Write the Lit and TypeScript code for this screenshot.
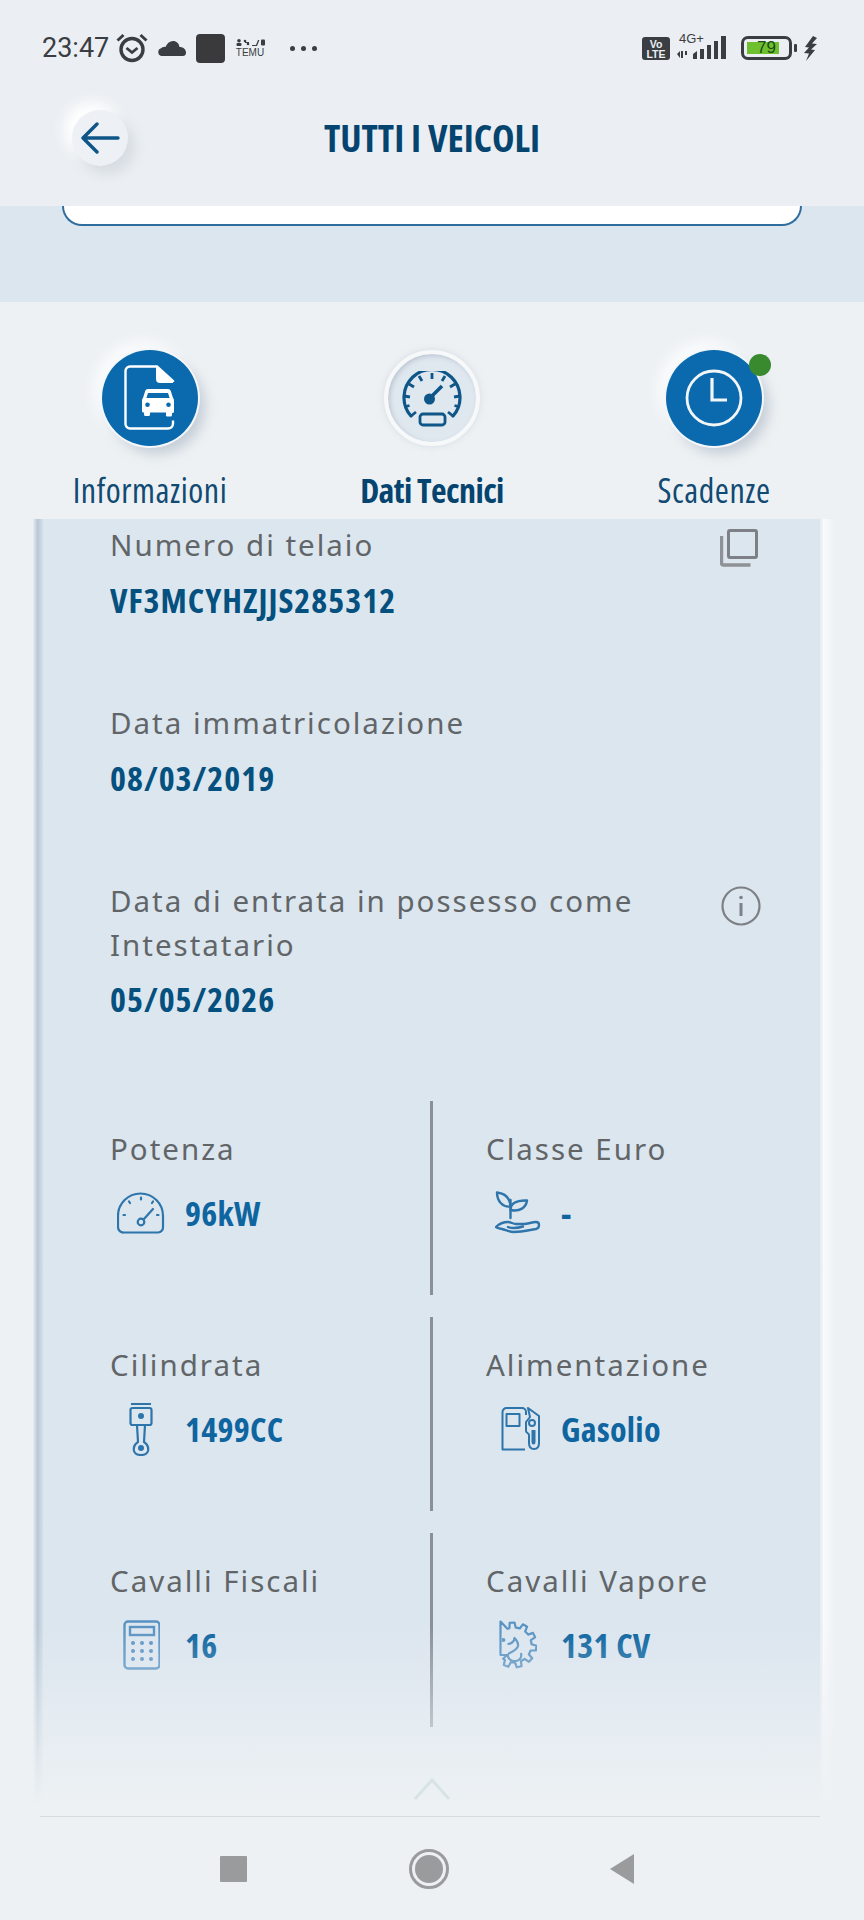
import { LitElement, html, css } from "lit";
import { customElement } from "lit/decorators.js";

// Half-gear outline for the "Cavalli Vapore" icon: teeth on the right, straight edge on the left.
const gearPath = (() => {
  const cx = 15;
  const cy = 25;
  const outer = 22.5;
  const inner = 17.5;
  const teeth = 7;
  const start = -112;
  const end = 128;
  const step = (end - start) / teeth;
  const pt = (a: number, r: number) => {
    const t = (a * Math.PI) / 180;
    return `${(cx + r * Math.cos(t)).toFixed(1)} ${(cy + r * Math.sin(t)).toFixed(1)}`;
  };
  let d = "M1.500 1.500L" + pt(start, inner);
  for (let n = 0; n < teeth; n++) {
    const a = start + n * step;
    d += ` L${pt(a + step * 0.2, inner)} L${pt(a + step * 0.32, outer)} L${pt(a + step * 0.68, outer)} L${pt(a + step * 0.8, inner)} L${pt(a + step, inner)}`;
  }
  return d + " L8 35 H1.500 Z";
})();

const i = {
  alarm: html`<svg width="32" height="30" viewBox="0 0 32 30" fill="none" stroke="#3a3d41" stroke-width="3.400"><circle cx="16" cy="16.500" r="11"/><path d="M10.500 15l5.500 4.500 5.500-4.500" stroke-width="2.800"/><path d="M1.500 7.500l6-5.500M30.500 7.500l-6-5.500" stroke-width="3"/></svg>`,
  cloud: html`<svg width="28" height="15" viewBox="0 0 28 15"><path fill="#3a3d41" d="M4 15a4 4 0 0 1-1-7.800C4 6.500 6 5.500 7.500 6 9 2 12 0 15 0c3.500 0 6 2.500 6.500 6 3-.2 6.500 2 6.500 5.500 0 2-1 3.500-3 3.500z"/></svg>`,
  temuTop: html`<svg width="29" height="7" viewBox="0 0 29 7" fill="#3a3d41"><circle cx="3" cy="1.800" r="1.800"/><rect x=".5" y="4" width="5" height="3" rx="1"/><circle cx="9" cy="2" r="1.300"/><circle cx="12" cy="5" r="1.300"/><rect x="9" y="3" width="4" height="1"/><path d="M16 6l4 0 2-5h1.400l-2.400 6h-5z"/><rect x="25" y=".5" width="4" height="6" rx="1"/></svg>`,
  back: html`<svg width="40" height="32" viewBox="0 0 40 32" fill="none" stroke="#0f5688" stroke-width="3.400" stroke-linecap="round" stroke-linejoin="round"><path d="M38 16H3M17 2L3 16l14 14"/></svg>`,
  doc: html`<svg width="52" height="66" viewBox="0 0 52 66" fill="none"><path stroke="#fff" stroke-width="2.400" d="M49 17V16L33 1.500H6a4.500 4.500 0 0 0-4.500 4.500v53a4.500 4.500 0 0 0 4.500 4.500h38a5 5 0 0 0 5-5v-3"/><path fill="#fff" d="M32 1l17 16v1H36a4 4 0 0 1-4-4z"/><path fill="#fff" fill-rule="evenodd" d="M24 24h20c1.400 0 2.400.8 2.800 2l2.200 7c.6.600 1 1.500 1 2.500v11a1.500 1.500 0 0 1-1.500 1.500H48v2a1.500 1.500 0 0 1-1.500 1.500h-3A1.500 1.500 0 0 1 42 49.500v-2H26v2a1.500 1.500 0 0 1-1.500 1.500h-3a1.500 1.500 0 0 1-1.500-1.500v-2h-.5A1.500 1.500 0 0 1 18 46.500v-11c0-1 .4-1.900 1-2.500l2.200-7c.4-1.200 1.400-2 2.800-2zM24 28l-1.600 5h23.200L44 28zM23.500 37.500a2.300 2.300 0 1 0 0 4.600 2.300 2.300 0 0 0 0-4.600zm21 0a2.300 2.300 0 1 0 0 4.600 2.300 2.300 0 0 0 0-4.600z"/></svg>`,
  gauge: html`<svg width="60" height="56" viewBox="0 0 60 56" fill="none" stroke="#0f5688" stroke-width="3.200"><path d="M9 45a28 28 0 1 1 42 0" stroke-linecap="round"/><path d="M30 2v6M17 5l3 5M7 13l5 3M2 25l6 1M2.500 36l5-1.500M43 5l-3 5M53 13l-5 3M58 25l-6 1M57.500 36l-5-1.500M9 45l5-4M51 45l-5-4" stroke-width="2.800"/><circle cx="27.500" cy="28" r="5.500" fill="#0f5688" stroke="none"/><path d="M29 26l11-11" stroke-width="3.600"/><rect x="18" y="43" width="25" height="11" rx="3" stroke-width="2.800"/></svg>`,
  clock: html`<svg width="58" height="58" viewBox="0 0 58 58" fill="none" stroke="#f3f6f9" stroke-width="2.800"><circle cx="29" cy="29" r="27"/><path d="M27 9v22h15" stroke-width="3.200"/></svg>`,
  copy: html`<svg width="38" height="38" viewBox="0 0 38 38" fill="none" stroke="#7d8084" stroke-width="3"><rect x="8.500" y="1.500" width="28" height="27" rx="1.500"/><path d="M1.500 7v27a2 2 0 0 0 2 2h27" stroke-width="3.400" stroke="#8e9195"/></svg>`,
  info: html`<svg width="40" height="40" viewBox="0 0 40 40" fill="none" stroke="#7d8084" stroke-width="2.200"><circle cx="20" cy="20" r="18.500"/><path d="M20 17v13" stroke-width="3"/><circle cx="20" cy="11.500" r="1.800" fill="#7d8084" stroke="none"/></svg>`,
  power: html`<svg width="48" height="42" viewBox="0 0 48 42" fill="none" stroke="#2d75ab" stroke-width="2.200"><path d="M7 40.500h34a5 5 0 0 0 5-5.500v-11a22.500 22.500 0 1 0-45 0v11a5.500 5.500 0 0 0 6 5.500z"/><circle cx="24" cy="30" r="3.300"/><path d="M26.500 27.500L36 17" stroke-linecap="round" stroke-width="2.200"/><path d="M24 5.500v2M12 9.500l1 1.500M36 9.500l-1 1.500M6.500 23H8M41.500 23H40" stroke-linecap="round" stroke-width="2.200"/></svg>`,
  leaf: html`<svg width="48" height="44" viewBox="-2 0 48 44" fill="none" stroke="#2d75ab" stroke-width="2.400" stroke-linejoin="round" stroke-linecap="round"><path d="M2 1.500c8 1 13 4.500 13.500 14C8 16.500 2 10.500 2 1.500z"/><path d="M15.500 19c0-6 5-10 16.500-9.500-1 7-7 11.500-16.500 9.500z"/><path d="M15.500 9v18"/><path d="M1 36c3-3 8-5 12-5 3 0 5 2 8 2h8c4 0 8-2 12-2 2 0 3 1 3 3 0 2-.5 3.500-3 4-6 1-15 3-22 3-5 0-8-2-12-3-3-.5-6-1-6-2z"/><path d="M13 36c5 2 10 1 15-.5"/></svg>`,
  piston: html`<svg width="24" height="54" viewBox="0 0 24 54" fill="none" stroke="#2d75ab" stroke-width="2.200" stroke-linejoin="round"><path d="M2 2h20" stroke-width="2"/><rect x="1.500" y="6" width="21" height="17" rx="2"/><circle cx="12" cy="14" r="3" fill="#2d75ab" stroke="none"/><path d="M8 23l1 17c-3 2-5 4-4 9 1 3 3 4 7 4s6-1 7-4c1-5-1-7-4-9l1-17"/><circle cx="12" cy="46" r="3" fill="#2d75ab" stroke="none"/></svg>`,
  pump: html`<svg width="48" height="44" viewBox="-8 0 48 44" fill="none" stroke="#2d75ab" stroke-width="2" stroke-linejoin="round"><path d="M24 42.500H1.500V5a4 4 0 0 1 4-4H21a4 4 0 0 1 4 4v3"/><rect x="5.500" y="7" width="13" height="12"/><path d="M27 1l11 8v27c0 4-2 6-5 6s-5-2-5-6v-8c0-2-3-2-3-4v-9l4-5z"/><circle cx="31" cy="16" r="3"/><path d="M31.500 23v12c0 2 2 2 2 0V23"/></svg>`,
  calc: html`<svg width="38" height="50" viewBox="-1 0 38 50" fill="none" stroke="#5a93c2" stroke-width="2.400"><rect x="1.500" y="1.500" width="35" height="47" rx="3.500"/><rect x="7" y="7" width="24" height="8"/><g fill="#5a93c2" stroke="none"><circle cx="10" cy="23" r="2"/><circle cx="19" cy="23" r="2"/><circle cx="28" cy="23" r="2"/><circle cx="10" cy="31" r="2"/><circle cx="19" cy="31" r="2"/><circle cx="28" cy="31" r="2"/><circle cx="10" cy="39" r="2"/><circle cx="19" cy="39" r="2"/><circle cx="28" cy="39" r="2"/></g></svg>`,
  steam: html`<svg width="40" height="50" viewBox="-2 0 40 50" fill="none" stroke="#5a93c2" stroke-width="2.200" stroke-linejoin="round"><path d=${gearPath}/><path d="M9 34c4-2 9-4 10-8 .5-3-1.500-6-3.500-8 0 4-4 6-7 6"/><path d="M9 34c-1 4 3 8 8 7 4-.5 6-4 5-8"/><circle cx="4.500" cy="20" r=".8" fill="#5a93c2"/></svg>`,
  bolt: html`<svg width="14" height="25" viewBox="0 0 14 25"><path fill="#3a3d41" d="M9 0L1 11l4 .5L0 17l5 .5-3 7.500 9-11-4-.6 6-5.400-5-.4L13 2z"/></svg>`,
};

const rows = [
  [
    { label: "Potenza", value: "96kW", icon: i.power },
    { label: "Classe Euro", value: "-", icon: i.leaf },
  ],
  [
    { label: "Cilindrata", value: "1499CC", icon: i.piston },
    { label: "Alimentazione", value: "Gasolio", icon: i.pump },
  ],
  [
    { label: "Cavalli Fiscali", value: "16", icon: i.calc },
    { label: "Cavalli Vapore", value: "131 CV", icon: i.steam },
  ],
];

@customElement("app-root")
export class AppRoot extends LitElement {
  static styles = css`
    :host {
      display: flex;
      flex-direction: column;
      width: 864px;
      height: 1920px;
      overflow: hidden;
      background: #edf1f4;
      color: #3a3d41;
      font-family: "Noto Sans", sans-serif;
    }
    .status {
      height: 76px;
      flex: none;
      display: flex;
      align-items: center;
      padding: 20px 46px 0 42px;
      box-sizing: border-box;
      background: #ebeff3;
    }
    .time {
      font: 400 27px/30px Roboto, sans-serif;
      color: #3a3d41;
      width: 64px;
    }
    .status-left {
      display: flex;
      align-items: center;
      gap: 10px;
    }
    .app-square {
      width: 29px;
      height: 29px;
      border-radius: 4px;
      background: #3a3a3d;
    }
    .temu {
      display: flex;
      flex-direction: column;
      align-items: center;
      gap: 2px;
      width: 30px;
      font: 400 10px/9px "Liberation Sans", sans-serif;
      color: #3a3d41;
    }
    .dots {
      display: flex;
      gap: 6px;
      margin-left: 15px;
    }
    .dots span {
      width: 5px;
      height: 5px;
      border-radius: 50%;
      background: #3a3d41;
    }
    .spacer {
      flex: 1;
    }
    .status-right {
      display: flex;
      align-items: center;
    }
    .volte {
      width: 28px;
      height: 23px;
      border-radius: 3px;
      background: #3a3d41;
      color: #ebeff3;
      font: 700 10.5px/10px "Liberation Sans", sans-serif;
      text-align: center;
      padding-top: 2px;
      box-sizing: border-box;
      margin-right: 7px;
    }
    .net {
      position: relative;
      width: 53px;
      height: 24px;
      margin-right: 11px;
    }
    .net-label {
      position: absolute;
      left: 2px;
      top: -4px;
      font: 400 13px/13px "Liberation Sans", sans-serif;
      color: #3a3d41;
    }
    .bars {
      position: absolute;
      right: 0;
      bottom: 0;
    }
    .battery {
      position: relative;
      width: 51px;
      height: 24px;
      box-sizing: border-box;
      border: 3px solid #3a3d41;
      border-radius: 7px;
      padding: 3px;
      margin-right: 2px;
    }
    .battery-fill {
      width: 32px;
      height: 100%;
      background: #6ec02f;
    }
    .battery-text {
      position: absolute;
      inset: 0;
      text-align: center;
      font: 400 17px/18px "Liberation Sans", sans-serif;
      color: #1d4a16;
    }
    .nub {
      width: 3px;
      height: 8px;
      background: #3a3d41;
      border-radius: 1px;
      margin-right: 7px;
    }
    .appbar {
      height: 130px;
      flex: none;
      position: relative;
      display: flex;
      align-items: flex-start;
      justify-content: center;
      background: #ebeff3;
    }
    .back {
      position: absolute;
      left: 72px;
      top: 34px;
      width: 56px;
      height: 56px;
      border-radius: 50%;
      background: #edf0f4;
      display: flex;
      align-items: center;
      justify-content: center;
      box-shadow: 7px 8px 12px rgba(170, 180, 190, 0.3), -8px -8px 14px #fff;
    }
    .title {
      margin-top: 38px;
      font-family: "Open Sans", sans-serif;
      font-weight: 700;
      font-stretch: 75%;
      font-size: 38px;
      line-height: 46px;
      color: #04446f;
    }
    .band {
      height: 96px;
      flex: none;
      background: #dce6ef;
    }
    .band-card {
      margin: 0 62px;
      height: 20px;
      box-sizing: border-box;
      background: #fff;
      border: 2px solid #2f6d9e;
      border-top: 0;
      border-radius: 0 0 20px 20px;
    }
    .tabs {
      height: 217px;
      flex: none;
      box-sizing: border-box;
      padding: 48px 50px 0;
      display: flex;
      justify-content: space-between;
    }
    .tab {
      position: relative;
      width: 200px;
      display: flex;
      flex-direction: column;
      align-items: center;
    }
    .circle {
      position: relative;
      width: 96px;
      height: 96px;
      border-radius: 50%;
      background: #0a6aad;
      display: flex;
      align-items: center;
      justify-content: center;
      box-shadow: 0 0 0 2px #f4f7fa, 7px 8px 12px rgba(160, 172, 185, 0.5),
        -8px -8px 14px #fbfcfd;
    }
    .circle.active {
      box-sizing: border-box;
      background: #dfe7ef;
      border: 4px solid #f6f8fa;
      padding-top: 2px;
      box-shadow: inset 2px 2px 4px rgba(160, 172, 185, 0.5),
        0 0 6px rgba(190, 200, 210, 0.5);
    }
    .dot {
      position: absolute;
      top: 4px;
      right: -9px;
      width: 22px;
      height: 22px;
      border-radius: 50%;
      background: #39892f;
    }
    .tab-label {
      margin-top: 23px;
      font-family: "Open Sans", sans-serif;
      font-stretch: 75%;
      font-size: 34px;
      line-height: 42px;
      letter-spacing: 0.55px;
      color: #114a72;
      white-space: nowrap;
    }
    .tab-label.active {
      font-weight: 700;
      letter-spacing: -0.6px;
      color: #04446f;
    }
    .frame {
      flex: 1;
      min-height: 0;
      margin: 0 44px 0 43px;
      position: relative;
      background: #dce6ef;
    }
    .frame::before {
      content: "";
      position: absolute;
      top: 0;
      bottom: 0;
      left: -10px;
      width: 10px;
      background: linear-gradient(to right, #e8edf2, #b9c8d6 45%, #d4dfe9);
    }
    .frame::after {
      content: "";
      position: absolute;
      top: 0;
      bottom: 0;
      right: -15px;
      width: 15px;
      background: linear-gradient(to right, #e9eef3 0 2px, #f9fafc 3px, #edf1f5);
    }
    .fade {
      position: absolute;
      z-index: 1;
      left: -10px;
      right: -15px;
      bottom: 0;
      height: 190px;
      background: linear-gradient(to bottom, rgba(237, 241, 244, 0), #edf1f4 95%);
    }
    .content {
      padding: 4px 62px 0 67px;
      display: flex;
      flex-direction: column;
    }
    .field {
      position: relative;
      margin-bottom: 79px;
    }
    .field.tall {
      margin-bottom: 81px;
    }
    .field.tall .value {
      margin-top: 10px;
    }
    .label {
      font: 400 29.5px/44px "Noto Sans", sans-serif;
      color: #616568;
      letter-spacing: 2px;
    }
    .value {
      margin-top: 11px;
      font-family: "Open Sans", sans-serif;
      font-weight: 700;
      font-stretch: 75%;
      font-size: 34px;
      line-height: 44px;
      letter-spacing: 1px;
      color: #04507f;
    }
    .field-icon {
      position: absolute;
      right: 0;
      top: 6px;
    }
    .field-icon.info {
      top: 7px;
      right: -3px;
    }
    .grid {
      margin-top: -1px;
      display: flex;
      flex-direction: column;
    }
    .row {
      display: grid;
      grid-template-columns: 323px 1fr;
      height: 216px;
    }
    .cell {
      height: 194px;
      padding-top: 26px;
      box-sizing: border-box;
    }
    .cell.first {
      border-right: 3px solid #8a9096;
    }
    .cell.second {
      margin-left: 53px;
    }
    .data {
      display: flex;
      align-items: center;
      height: 60px;
      margin-top: 12px;
    }
    .icon-slot {
      width: 48px;
      margin: 0 20px 0 7px;
      display: flex;
      justify-content: center;
    }
    .data-value {
      font-family: "Open Sans", sans-serif;
      font-weight: 700;
      font-stretch: 75%;
      font-size: 34px;
      line-height: 44px;
      letter-spacing: 0.3px;
      color: #0e659f;
    }
    .footer {
      height: 104px;
      flex: none;
      display: flex;
      flex-direction: column;
    }
    .rule {
      margin: 0 44px 0 40px;
      height: 1px;
      background: #d3dbe0;
    }
    .nav {
      flex: 1;
      display: flex;
      align-items: center;
      gap: 162px;
      padding-left: 220px;
    }
    .nav-back {
      margin-left: -2px;
    }
    .chevron {
      position: absolute;
      z-index: 2;
      left: 371px;
      bottom: 16px;
    }
  `;

  render() {
    return html`
      <div class="status">
        <div class="status-left">
          <div class="time">23:47</div>
          ${i.alarm}${i.cloud}
          <div class="app-square"></div>
          <div class="temu">${i.temuTop}<span>TEMU</span></div>
          <div class="dots"><span></span><span></span><span></span></div>
        </div>
        <div class="spacer"></div>
        <div class="status-right">
          <div class="volte">Vo<br />LTE</div>
          <div class="net">
            <span class="net-label">4G+</span>
            <svg class="bars" width="53" height="24" viewBox="0 0 53 24" fill="#3a3d41">
              <path d="M0 18l3-3v7zM4 15h2v7H4zM8 15h2v4H8z" />
              <path d="M16 18l4-3v8h-4zM23 13h4v10h-4zM30 9h4v14h-4zM37 5h4v18h-4zM44 0h5v23h-5z" />
            </svg>
          </div>
          <div class="battery">
            <div class="battery-fill"></div>
            <div class="battery-text">79</div>
          </div>
          <div class="nub"></div>
          ${i.bolt}
        </div>
      </div>
      <div class="appbar">
        <div class="back">${i.back}</div>
        <div class="title">TUTTI I VEICOLI</div>
      </div>
      <div class="band"><div class="band-card"></div></div>
      <div class="tabs">
        <div class="tab">
          <div class="circle">${i.doc}</div>
          <div class="tab-label">Informazioni</div>
        </div>
        <div class="tab">
          <div class="circle active">${i.gauge}</div>
          <div class="tab-label active">Dati Tecnici</div>
        </div>
        <div class="tab">
          <div class="circle">${i.clock}<span class="dot"></span></div>
          <div class="tab-label">Scadenze</div>
        </div>
      </div>
      <div class="frame">
        <div class="content">
          <div class="field">
            <div class="label">Numero di telaio</div>
            <div class="value">VF3MCYHZJJS285312</div>
            <div class="field-icon">${i.copy}</div>
          </div>
          <div class="field">
            <div class="label">Data immatricolazione</div>
            <div class="value">08/03/2019</div>
          </div>
          <div class="field tall">
            <div class="label">Data di entrata in possesso come<br />Intestatario</div>
            <div class="value">05/05/2026</div>
            <div class="field-icon info">${i.info}</div>
          </div>
          <div class="grid">
            ${rows.map(
              (r) => html`<div class="row">
                ${r.map(
                  (c, n) => html`<div class="cell ${n === 0 ? "first" : "second"}">
                    <div class="label">${c.label}</div>
                    <div class="data">
                      <div class="icon-slot">${c.icon}</div>
                      <div class="data-value">${c.value}</div>
                    </div>
                  </div>`
                )}
              </div>`
            )}
          </div>
        </div>
        <div class="fade"></div>
        <svg class="chevron" width="36" height="22" viewBox="0 0 36 22" fill="none" stroke="#d8e3e5" stroke-width="3">
          <path d="M1 21L18 2l17 19" />
        </svg>
      </div>
      <div class="footer">
        <div class="rule"></div>
        <div class="nav">
          <svg width="27" height="26" viewBox="0 0 27 26"><rect width="27" height="26" rx="1" fill="#999b9d" /></svg>
          <svg width="40" height="40" viewBox="0 0 40 40" fill="none">
            <circle cx="20" cy="20" r="18.500" stroke="#999b9d" stroke-width="3" />
            <circle cx="20" cy="20" r="14" fill="#999b9d" />
          </svg>
          <svg class="nav-back" width="25" height="30" viewBox="0 0 25 30"><path d="M25 0v30L1 15z" fill="#999b9d" /></svg>
        </div>
      </div>
    `;
  }
}
